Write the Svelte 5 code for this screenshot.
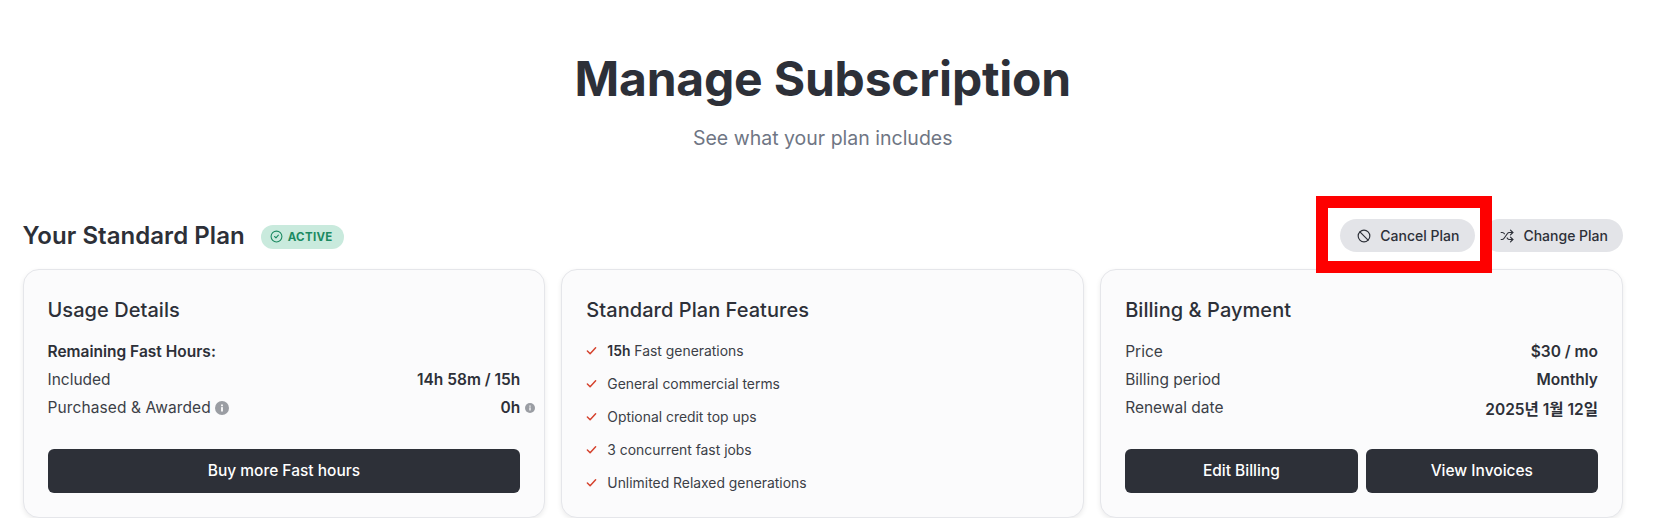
<script>
  const features = [
    { bold: "15h", text: " Fast generations" },
    { bold: "", text: "General commercial terms" },
    { bold: "", text: "Optional credit top ups" },
    { bold: "", text: "3 concurrent fast jobs" },
    { bold: "", text: "Unlimited Relaxed generations" },
  ];
  const billing = [
    ["Price", "$30 / mo"],
    ["Billing period", "Monthly"],
    ["Renewal date", "2025년 1월 12일"],
  ];
</script>

{#snippet info(size)}
  <svg class="info" width={size} height={size} viewBox="0 0 16 16" aria-hidden="true">
    <circle cx="8" cy="8" r="8" fill="#9a9da3" />
    <rect x="7" y="7" width="2" height="5" fill="#fff" />
    <rect x="7" y="4" width="2" height="2" fill="#fff" />
  </svg>
{/snippet}

<div class="page">
  <header class="top">
    <h1>Manage Subscription</h1>
    <p>See what your plan includes</p>
  </header>

  <div class="planbar">
    <div class="plantitle">
      <h2>Your Standard Plan</h2>
      <span class="badge">
        <svg width="13" height="13" viewBox="0 0 24 24" fill="none" stroke="currentColor" stroke-width="2" stroke-linecap="round" stroke-linejoin="round">
          <circle cx="12" cy="12" r="10" />
          <path d="m8.5 12 2.5 2.5 4.5-5" />
        </svg>
        ACTIVE
      </span>
    </div>
    <div class="actions">
      <button class="pill marked">
        <svg width="14" height="14" viewBox="0 0 24 24" fill="none" stroke="currentColor" stroke-width="2" stroke-linecap="round">
          <circle cx="12" cy="12" r="10" />
          <path d="m5 5 14 14" />
        </svg>
        Cancel Plan
      </button>
      <button class="pill">
        <svg width="14" height="14" viewBox="0 0 24 24" fill="none" stroke="currentColor" stroke-width="2" stroke-linecap="round" stroke-linejoin="round">
          <path d="M2 18h1.4c1.3 0 2.5-.6 3.3-1.7l6.1-8.6c.7-1.1 2-1.7 3.3-1.7H22" />
          <path d="m18 2 4 4-4 4" />
          <path d="M2 6h1.9c1.5 0 2.9.9 3.6 2.2" />
          <path d="M22 18h-5.9c-1.3 0-2.6-.7-3.3-1.8l-.5-.8" />
          <path d="m18 14 4 4-4 4" />
        </svg>
        Change Plan
      </button>
    </div>
  </div>

  <div class="cards">
    <section class="card">
      <h3>Usage Details</h3>
      <div class="rows">
        <div class="row strong">Remaining Fast Hours:</div>
        <div class="row"><span>Included</span><b>14h 58m / 15h</b></div>
        <div class="row">
          <span class="withinfo">Purchased &amp; Awarded {@render info(14)}</span>
          <b class="hang">0h {@render info(10)}</b>
        </div>
      </div>
      <div class="btns"><button class="dark">Buy more Fast hours</button></div>
    </section>

    <section class="card">
      <h3>Standard Plan Features</h3>
      <ul>
        {#each features as f}
          <li>
            <svg width="11" height="11" viewBox="0 0 24 24" fill="none" stroke="#d5412c" stroke-width="3.2" stroke-linecap="round" stroke-linejoin="round">
              <path d="M3 13l6 6L21 6" />
            </svg>
            <span>{#if f.bold}<b>{f.bold}</b>{/if}{f.text}</span>
          </li>
        {/each}
      </ul>
    </section>

    <section class="card">
      <h3>Billing &amp; Payment</h3>
      <div class="rows">
        {#each billing as [k, v]}
          <div class="row"><span>{k}</span><b>{v}</b></div>
        {/each}
      </div>
      <div class="btns">
        <button class="dark">Edit Billing</button>
        <button class="dark">View Invoices</button>
      </div>
    </section>
  </div>
</div>

<style>
  :global(body) { margin: 0; background: #fff; }
  .page { width: 1646px; box-sizing: border-box; padding: 49px 23px 0 22.5px;
    font-family: Inter, "Noto Sans CJK KR", sans-serif; color: #2d3038; }
  .top { text-align: center; }
  h1 { margin: 0; font-size: 48px; line-height: 60px; font-weight: 700; letter-spacing: -0.2px; }
  .top p { margin: 15px 0 0; font-size: 19.5px; line-height: 28px; color: #6f7684; }
  .planbar { display: flex; justify-content: space-between; align-items: center;
    margin-top: 67px; height: 33px; }
  .plantitle { display: flex; align-items: center; gap: 16px; }
  h2 { margin: 0; font-size: 24px; font-weight: 600; letter-spacing: 0.05px; }
  .badge { display: inline-flex; align-items: center; gap: 5px; height: 24px; margin-top: 2px; padding: 0 11px 0 9px;
    border-radius: 12px; background: #c9eadd; color: #1c8a62; font-size: 11.5px; font-weight: 700;
    letter-spacing: 0.3px; }
  .actions { display: flex; gap: 8px; }
  .pill { display: inline-flex; align-items: center; gap: 9px; height: 33px; padding: 0 16px 0 17px;
    border: 0; border-radius: 17px; background: #e3e4e8; color: #2d3038;
    font: 500 14px Inter, sans-serif; }
  .pill + .pill { padding-right: 15px; }
  /* review marker sits on top of the button */
  .marked { position: relative; }
  .marked::after { content: ""; position: absolute; left: -24px; top: -23px; width: 152px; height: 53px;
    border: 12px solid #fe0000; pointer-events: none; }
  .cards { display: grid; grid-template-columns: repeat(3, 1fr); gap: 16px; margin-top: 17px; }
  .card { display: flex; flex-direction: column; height: 249px; box-sizing: border-box; padding: 24px 24px 24px;
    border: 1px solid #e5e6ea; border-radius: 16px; background: #fbfbfc;
    box-shadow: 0 2px 5px rgba(0, 0, 0, 0.08); }
  h3 { margin: 0; font-size: 20px; line-height: 32px; font-weight: 500; letter-spacing: 0.05px; }
  .rows { margin-top: 11.5px; }
  .row { display: flex; justify-content: space-between; align-items: center; height: 28px;
    font-size: 15.5px; color: #3c3f47; }
  .row b { font-weight: 600; color: #2d3038; }
  .strong { font-weight: 600; color: #2d3038; }
  .withinfo { display: inline-flex; align-items: center; gap: 4px; letter-spacing: 0.1px; }
  .hang { display: inline-flex; align-items: center; gap: 5px; margin-right: -15px; }
  .info { flex: none; }
  .btns { display: flex; gap: 8px; margin-top: auto; }
  .dark { flex: 1; height: 44px; padding: 0 0 2px; border: 0; border-radius: 6px; background: #2d3038; color: #fff;
    font: 500 15.5px Inter, sans-serif; }
  ul { list-style: none; margin: 14px 0 0; padding: 0; display: flex; flex-direction: column; gap: 12px; }
  li { display: flex; align-items: center; gap: 10px; height: 21px; font-size: 13.9px; color: #3c3f47; }
  li b { font-weight: 600; color: #2d3038; }
</style>
